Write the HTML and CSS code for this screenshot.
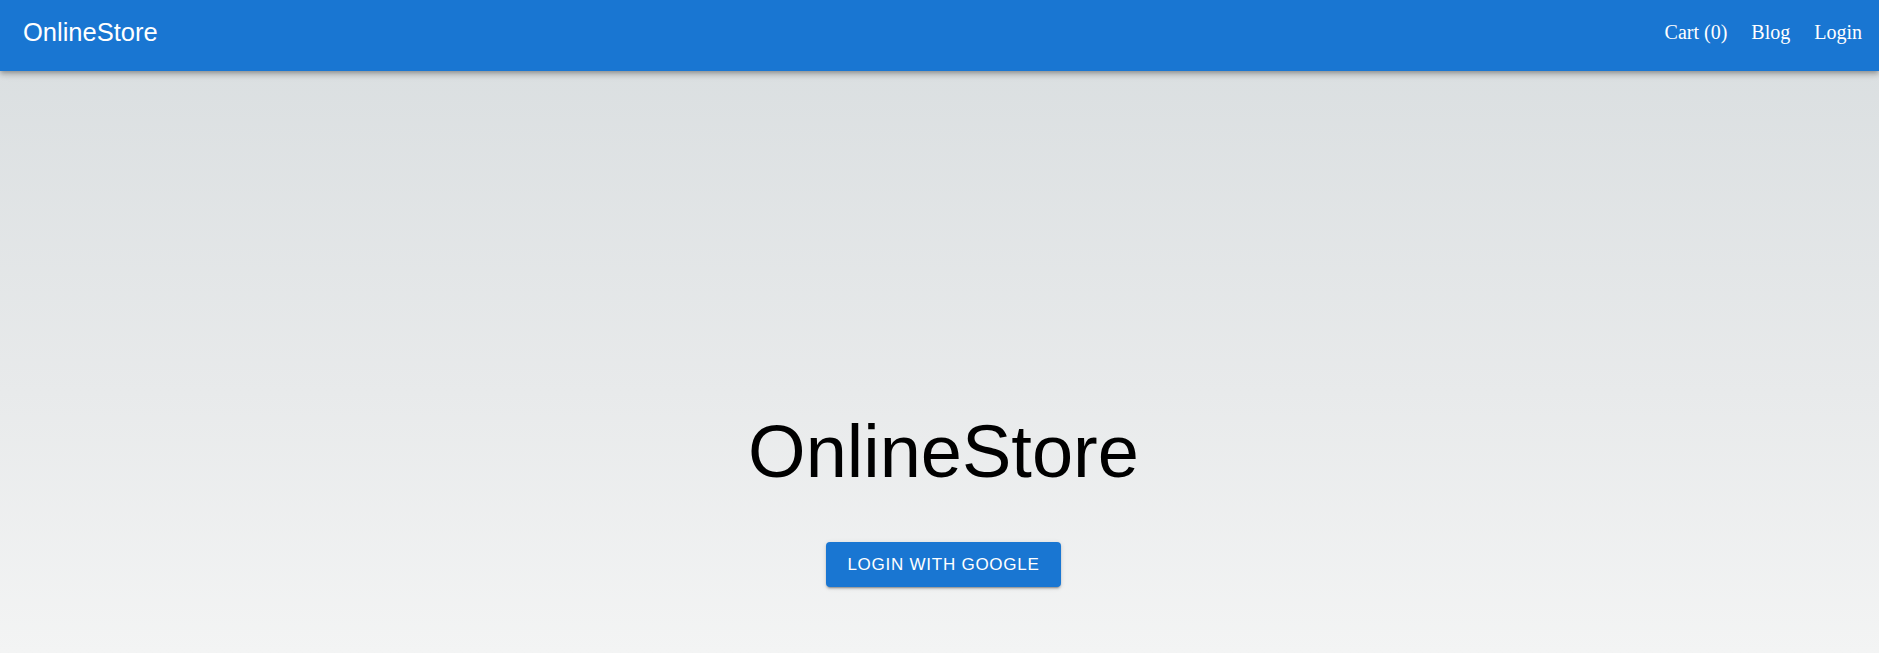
FILE: index.html
```html
<!DOCTYPE html>
<html lang="en">
<head>
<meta charset="utf-8">
<title>OnlineStore</title>
<link rel="stylesheet" href="styles.css">
</head>
<body>
<header class="appbar">
  <div class="brand">OnlineStore</div>
  <nav class="nav">
    <a class="nav-link" href="#">Cart (0)</a>
    <a class="nav-link" href="#">Blog</a>
    <a class="nav-link" href="#">Login</a>
  </nav>
</header>
<main class="hero">
  <h1 class="hero-title">OnlineStore</h1>
  <button class="btn-google" type="button">LOGIN WITH GOOGLE</button>
</main>
</body>
</html>
```
FILE: styles.css
```css
html, body {
  margin: 0;
  padding: 0;
  height: 100%;
  overflow: hidden;
}
body {
  font-family: "Liberation Sans", Arial, sans-serif;
  background: linear-gradient(to bottom, #d8dddf 0%, #e8eaeb 60%, #f3f4f4 100%);
  display: flex;
  flex-direction: column;
}
.appbar {
  position: relative;
  z-index: 2;
  height: 71px;
  box-sizing: border-box;
  background: #1976d2;
  color: #fff;
  display: flex;
  align-items: center;
  justify-content: space-between;
  padding: 0 17px 6px 23px;
  box-shadow: 0 2px 4px -1px rgba(0,0,0,0.2), 0 4px 5px 0 rgba(0,0,0,0.14), 0 1px 10px 0 rgba(0,0,0,0.12);
}
.brand {
  font-family: "Liberation Sans", Arial, sans-serif;
  font-size: 25.5px;
  line-height: 1.15;
}
.nav {
  display: flex;
  gap: 24px;
}
.nav-link {
  font-family: "Liberation Serif", "Times New Roman", serif;
  font-size: 20px;
  color: #fff;
  text-decoration: none;
  line-height: 1.15;
}
.hero {
  flex: 1;
  display: flex;
  flex-direction: column;
  align-items: center;
  padding: 345px 0 0 8px;
}
.hero-title {
  margin: 0;
  font-family: "Liberation Sans", Arial, sans-serif;
  font-weight: 400;
  font-size: 74px;
  line-height: 72px;
  color: #000;
}
.btn-google {
  margin-top: 54px;
  height: 45px;
  padding: 0 21px;
  border: 0;
  border-radius: 4px;
  background: #1976d2;
  color: #fff;
  font-family: "Liberation Sans", Arial, sans-serif;
  font-size: 17px;
  letter-spacing: 0.75px;
  box-shadow: 0 3px 1px -2px rgba(0,0,0,0.2), 0 2px 2px 0 rgba(0,0,0,0.14), 0 1px 5px 0 rgba(0,0,0,0.12);
  cursor: pointer;
}
```
